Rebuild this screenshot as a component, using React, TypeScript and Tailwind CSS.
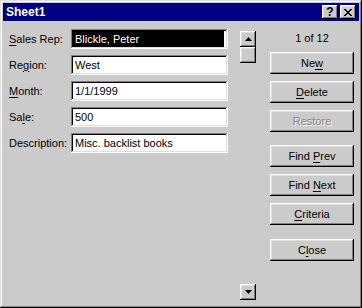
import React from 'react';

const raised = 'shadow-[inset_-1px_-1px_#000,inset_1px_1px_#fff,inset_-2px_-2px_#808080,inset_2px_2px_#dfdfdf]';
const sunken = 'shadow-[inset_-1px_-1px_#fff,inset_1px_1px_#808080,inset_-2px_-2px_#dfdfdf,inset_2px_2px_#000]';

function Mnemonic({ text, at }: { text: string; at: number }) {
  if (at < 0) return <>{text}</>;
  return (
    <>
      {text.slice(0, at)}
      <span className="underline underline-offset-[2px]">{text[at]}</span>
      {text.slice(at + 1)}
    </>
  );
}

const fields = [
  { label: 'Sales Rep:', at: 0, value: 'Blickle, Peter', selected: true },
  { label: 'Region:', at: 2, value: 'West' },
  { label: 'Month:', at: 0, value: '1/1/1999' },
  { label: 'Sale:', at: 2, value: '500' },
  { label: 'Description:', at: -1, value: 'Misc. backlist books' },
];

function Btn({ text, at, disabled, className = '' }: { text: string; at: number; disabled?: boolean; className?: string }) {
  return (
    <div
      className={`h-[22px] w-[84px] flex items-center justify-center bg-[#cbcbcb] ${raised} ${
        disabled ? 'text-[#808080] [text-shadow:1px_1px_0_#fff]' : 'text-black'
      } ${className}`}
    >
      <span>
        <Mnemonic text={text} at={at} />
      </span>
    </div>
  );
}

function Arrow({ down }: { down?: boolean }) {
  return (
    <svg width="7" height="4" viewBox="0 0 7 4">
      {down ? <polygon points="0,0 7,0 3.5,4" fill="#000" /> : <polygon points="3.5,0 7,4 0,4" fill="#000" />}
    </svg>
  );
}

export default function App() {
  return (
    <div className="w-[362px] h-[308px] bg-[#cbcbcb] p-[3px] flex flex-col text-[11px] leading-[13px] text-black [font-family:'Liberation_Sans',Arial,sans-serif] shadow-[inset_-1px_-1px_#000,inset_1px_1px_#dfdfdf,inset_-2px_-2px_#808080,inset_2px_2px_#fff]">
      {/* title bar */}
      <div className="h-[18px] bg-[#000080] flex items-center pl-[3px] pr-[3px]">
        <span className="text-white font-bold text-[12px] flex-1">Sheet1</span>
        <div className={`w-[16px] h-[14px] bg-[#cbcbcb] ${raised} flex items-center justify-center font-bold text-[12px] leading-none pb-[1px]`}>?</div>
        <div className={`w-[16px] h-[14px] ml-[2px] bg-[#cbcbcb] ${raised} flex items-center justify-center`}>
          <svg width="8" height="7" viewBox="0 0 8 7" shapeRendering="crispEdges">
            <path d="M0 0h2v1h-2zM6 0h2v1h-2zM1 1h2v1h-2zM5 1h2v1h-2zM2 2h4v1h-4zM3 3h2v1h-2zM2 4h4v1h-4zM1 5h2v1h-2zM5 5h2v1h-2zM0 6h2v1h-2zM6 6h2v1h-2z" fill="#000" />
          </svg>
        </div>
      </div>

      {/* body */}
      <div className="flex-1 flex items-start pl-[6px] pt-[8px]">
        <div className="flex flex-col gap-[6px] w-[219px]">
          {fields.map((f) => (
            <div key={f.label} className="flex items-center h-[20px]">
              <div className="w-[62px]">
                <Mnemonic text={f.label} at={f.at} />
              </div>
              <div className={`w-[157px] h-[20px] bg-white ${sunken} p-[2px] flex`}>
                {f.selected ? (
                  <div className="flex-1 mr-[2px] bg-black text-white pl-[2px] flex items-center">{f.value}</div>
                ) : (
                  <div className="flex-1 pl-[2px] flex items-center">{f.value}</div>
                )}
              </div>
            </div>
          ))}
        </div>

        {/* scrollbar */}
        <div className="ml-[12px] mt-[2px] w-[16px] h-[269px] flex flex-col">
          <div className={`h-[16px] ${raised} flex items-center justify-center`}>
            <Arrow />
          </div>
          <div className={`h-[16px] ${raised}`} />
          <div className="flex-1" />
          <div className={`h-[16px] ${raised} flex items-center justify-center`}>
            <Arrow down />
          </div>
        </div>

        {/* buttons */}
        <div className="ml-[14px] flex flex-col">
          <div className="h-[23px] pb-[5px] flex items-center justify-center">1 of 12</div>
          <div className="flex flex-col gap-[7px]">
            <Btn text="New" at={2} />
            <Btn text="Delete" at={0} />
            <Btn text="Restore" at={-1} disabled />
            <Btn text="Find Prev" at={5} className="mt-[6px]" />
            <Btn text="Find Next" at={5} />
            <Btn text="Criteria" at={0} />
            <Btn text="Close" at={1} className="mt-[7px]" />
          </div>
        </div>
      </div>
    </div>
  );
}
